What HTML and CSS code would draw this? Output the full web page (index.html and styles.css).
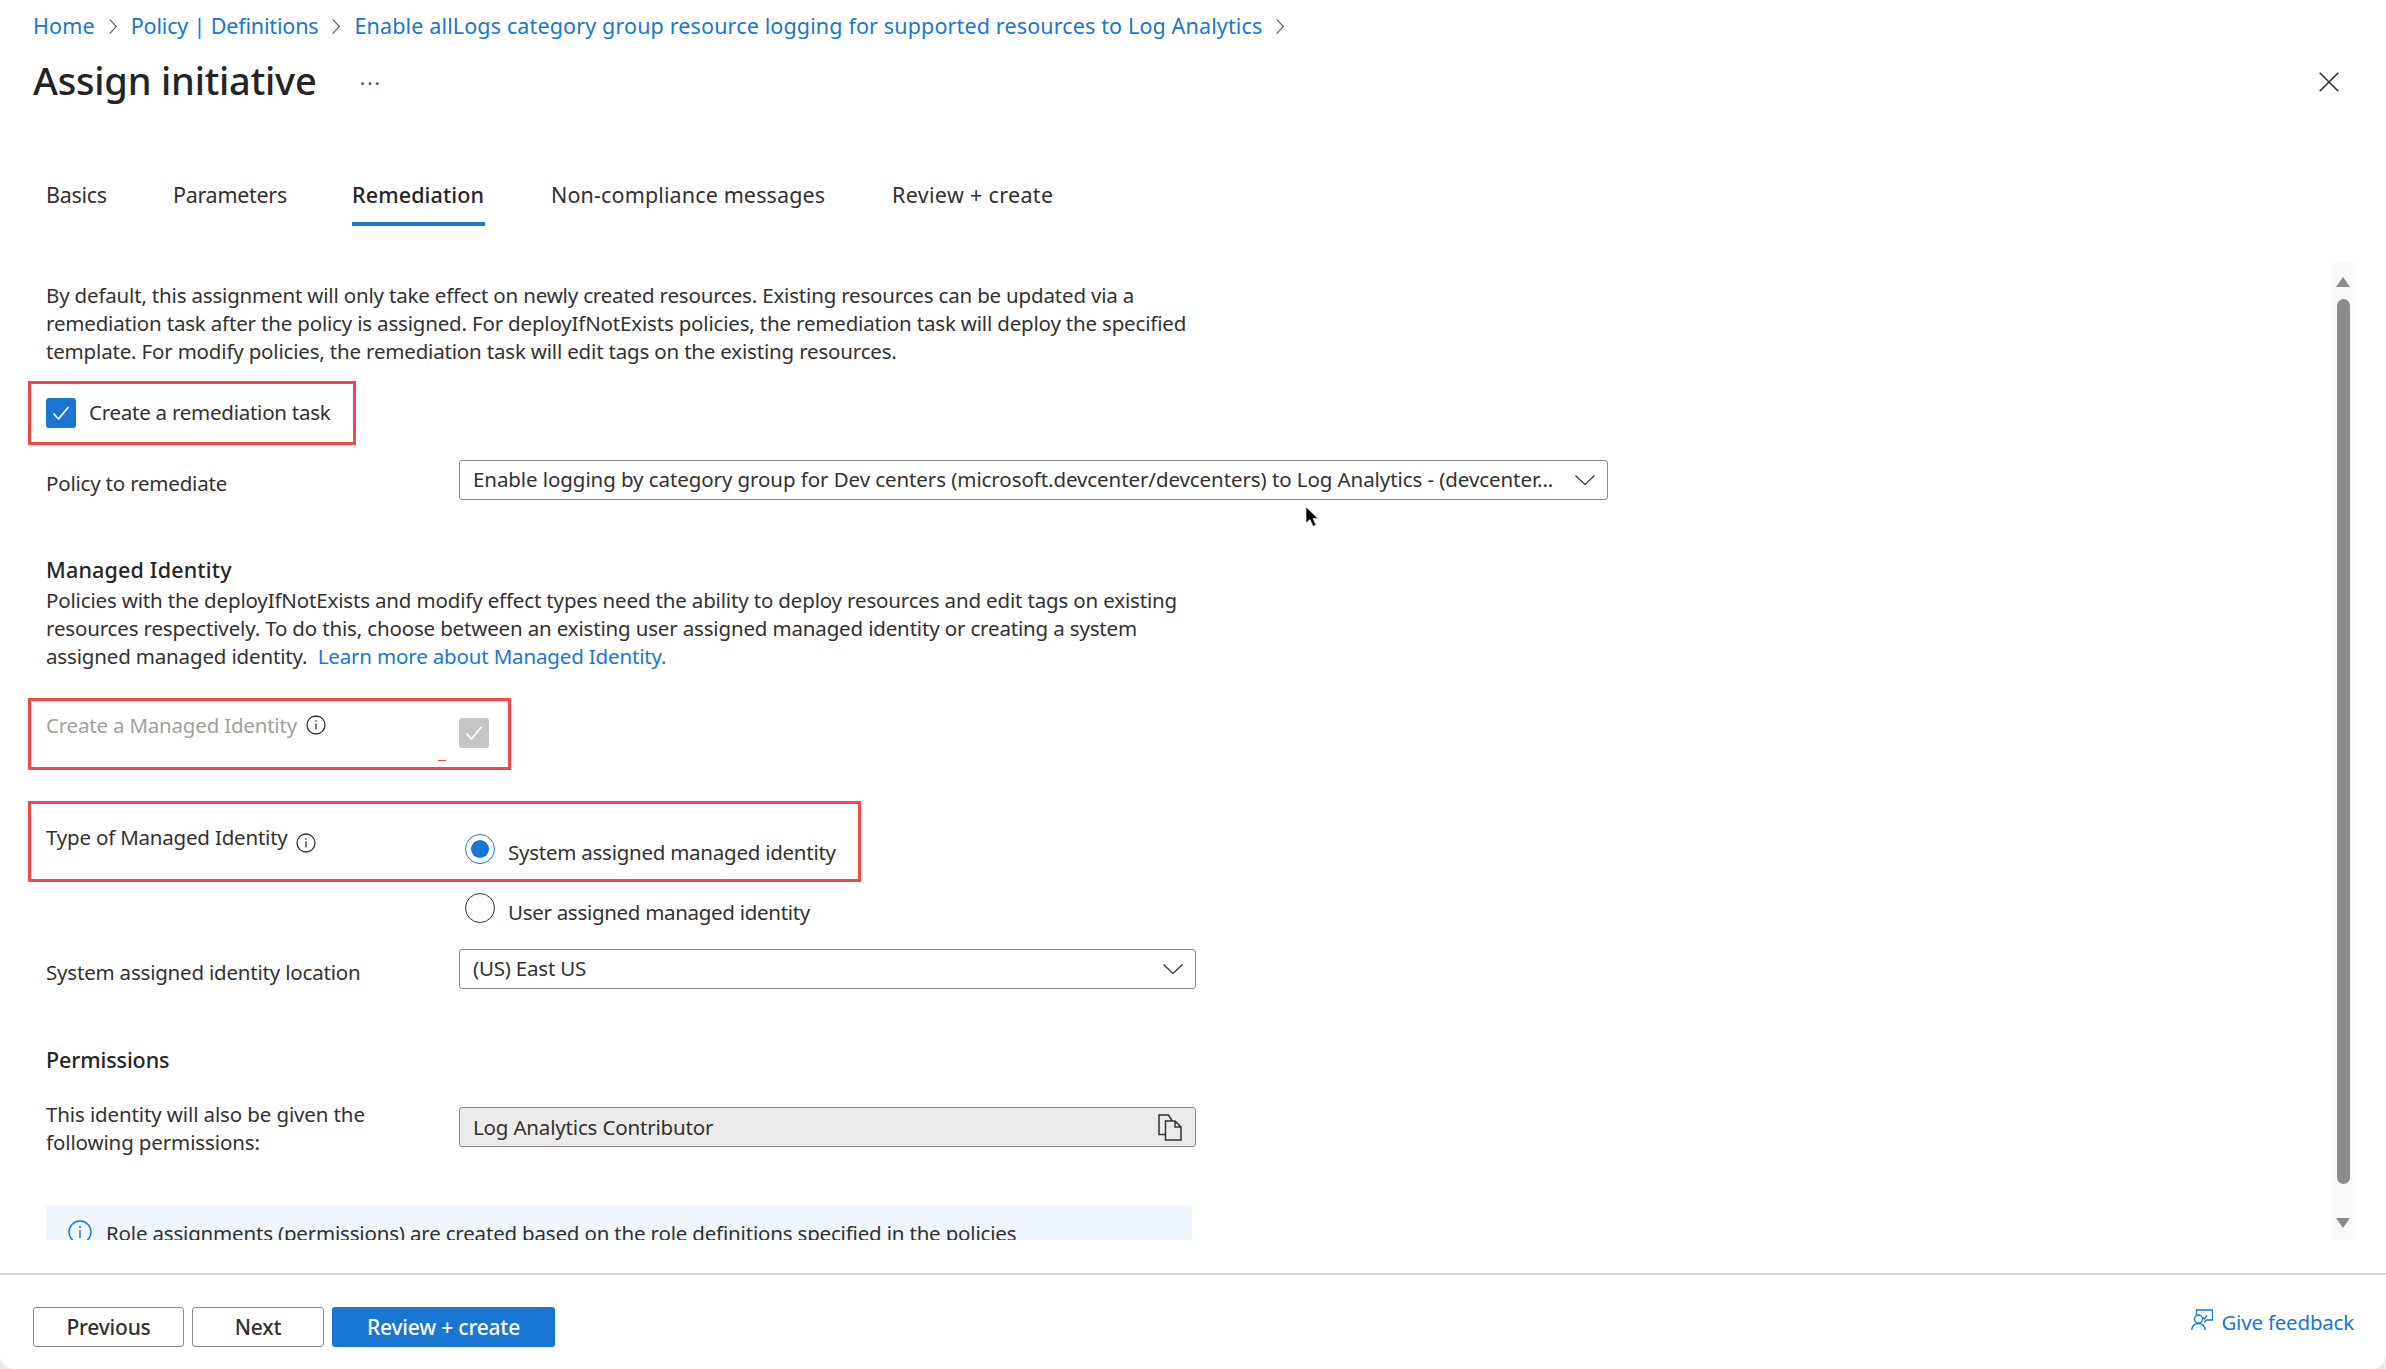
FILE: index.html
```html
<!DOCTYPE html>
<html lang="en">
<head>
<meta charset="utf-8">
<title>Assign initiative</title>
<link rel="stylesheet" href="styles.css">
</head>
<body>
<div class="page">
  <nav class="crumbs">
    <a class="link">Home</a>
    <svg class="crumb-sep" viewBox="0 0 10 18"><path d="M1.5 1.5 8.5 9l-7 7.5"/></svg>
    <a class="link crumb-policy">Policy | Definitions</a>
    <svg class="crumb-sep" viewBox="0 0 10 18"><path d="M1.5 1.5 8.5 9l-7 7.5"/></svg>
    <a class="link">Enable allLogs category group resource logging for supported resources to Log Analytics</a>
    <svg class="crumb-sep" viewBox="0 0 10 18"><path d="M1.5 1.5 8.5 9l-7 7.5"/></svg>
  </nav>
  <header class="title-row">
    <h1 class="title">Assign initiative</h1>
    <span class="more">···</span>
    <svg class="close" viewBox="0 0 20 20"><path d="M.7.7l18.6 18.6M19.3.7.7 19.3"/></svg>
  </header>
  <div class="tabs">
    <span class="tab tab-basics">Basics</span>
    <span class="tab tab-params">Parameters</span>
    <span class="tab tab-active">Remediation</span>
    <span class="tab tab-non">Non-compliance messages</span>
    <span class="tab tab-review">Review + create</span>
  </div>
  <div class="body">
    <main class="content">
      <p class="para intro">By default, this assignment will only take effect on newly created resources. Existing resources can be updated via a<br>remediation task after the policy is assigned. For deployIfNotExists policies, the remediation task will deploy the specified<br>template. For modify policies, the remediation task will edit tags on the existing resources.</p>

      <div class="redbox box-task">
        <span class="check check-on"><svg viewBox="0 0 30 30"><path d="M7.5 15.5l5 5.5 10-12"/></svg></span>
        <span class="task-label">Create a remediation task</span>
      </div>

      <div class="row row-policy">
        <span class="row-label pad9">Policy to remediate</span>
        <div class="field field-wide">
          <span class="field-text policy-text">Enable logging by category group for Dev centers (microsoft.devcenter/devcenters) to Log Analytics - (devcenter...</span>
          <svg class="chev" viewBox="0 0 20 10"><path d="M.5.5 10 9.5 19.5.5"/></svg>
        </div>
      </div>

      <h2 class="heading head-mi">Managed Identity</h2>
      <p class="para mi-para">Policies with the deployIfNotExists and modify effect types need the ability to deploy resources and edit tags on existing<br>resources respectively. To do this, choose between an existing user assigned managed identity or creating a system<br>assigned managed identity. &nbsp;<a class="link">Learn more about Managed Identity.</a></p>

      <div class="redbox box-create">
        <span class="create-label">Create a Managed Identity
          <svg class="info" viewBox="0 0 20 20"><circle cx="10" cy="10" r="9"/><path d="M10 8.5v6M10 5.2v1.6"/></svg>
        </span>
        <span class="check check-off"><svg viewBox="0 0 30 30"><path d="M7.5 15.5l5 5.5 10-12"/></svg></span>
        <span class="dash"></span>
      </div>

      <div class="redbox box-type">
        <span class="type-label">Type of Managed Identity
          <svg class="info info-low" viewBox="0 0 20 20"><circle cx="10" cy="10" r="9"/><path d="M10 8.5v6M10 5.2v1.6"/></svg>
        </span>
        <span class="radio radio-on"></span>
        <span class="radio-text">System assigned managed identity</span>
      </div>

      <div class="radio-row">
        <span class="radio"></span>
        <span class="radio-text2">User assigned managed identity</span>
      </div>

      <div class="row row-location">
        <span class="row-label pad9">System assigned identity location</span>
        <div class="field field-std">
          <span class="field-text">(US) East US</span>
          <svg class="chev" viewBox="0 0 20 10"><path d="M.5.5 10 9.5 19.5.5"/></svg>
        </div>
      </div>

      <h2 class="heading head-perm">Permissions</h2>

      <div class="row row-perm">
        <span class="row-label perm-label">This identity will also be given the<br>following permissions:</span>
        <div class="field field-std field-ro">
          <span class="ro-text">Log Analytics Contributor</span>
          <svg class="copy" viewBox="0 0 24 27"><path d="M7.5 20.500H1V1h9.500l3.500 5.500M7.500 7h9.500l6 6v13H7.500z M17 7v6h6"/></svg>
        </div>
      </div>

      <div class="notice">
        <svg class="notice-icon" viewBox="0 0 24 24"><circle cx="12" cy="12" r="11"/><path d="M12 10v8M12 6v2"/></svg>
        <span>Role assignments (permissions) are created based on the role definitions specified in the policies</span>
      </div>
    </main>
    <div class="scrollbar">
      <span class="arrow-up"></span>
      <span class="thumb"></span>
      <span class="arrow-down"></span>
    </div>
  </div>
  <footer class="footer">
    <button class="btn btn-prev">Previous</button>
    <button class="btn btn-next">Next</button>
    <button class="btn btn-primary">Review + create</button>
    <a class="feedback">
      <svg class="feedback-icon" viewBox="0 0 22 22"><path d="M5.500 6V1h16v10h-6l-2.500 2.500"/><path d="M16 6l-2.500 4-2-1.500"/><circle cx="7.500" cy="10" r="4"/><path d="M.7 21c.5-4 3-6.500 6.800-6.500s6.300 2.500 6.800 6.500"/></svg>
      <span>Give feedback</span>
    </a>
  </footer>
  <svg class="cursor" viewBox="0 0 12 20"><path d="M0 0v16l4-3.500 3 7 3-1.500-3-6.500h5z"/></svg>
</div>
</body>
</html>
```
FILE: styles.css
```css
* { box-sizing: border-box; }
html, body { margin: 0; padding: 0; height: 100%; background: #ececec; overflow: hidden; }
body { font-family: "Noto Sans", "Open Sans", "Liberation Sans", sans-serif; font-size: 20.5px; line-height: 28px; color: #323130; letter-spacing: -0.2px; }
.page { position: relative; width: 2386px; height: 1369px; background: #fff; border-radius: 0 0 14px 14px; display: flex; flex-direction: column; overflow: hidden; }
.link { color: #1976d2; }

.crumbs { display: flex; align-items: center; padding: 12px 0 0 33px; height: 40px; font-size: 21.5px; letter-spacing: 0.14px; }
.crumb-policy { letter-spacing: -0.16px; }
.crumb-sep { width: 10px; height: 17px; margin: 0 13px; fill: none; stroke: #605e5c; stroke-width: 1.2; }

.title-row { display: flex; align-items: center; height: 50px; margin-top: 15px; padding: 0 47px 0 33px; }
.title { margin: 0; font-size: 38px; line-height: 50px; font-weight: 500; color: #242424; letter-spacing: -0.2px; }
.more { margin: 4px 0 0 43px; font-size: 22px; color: #605e5c; letter-spacing: 1.5px; }
.close { margin: 4px 0 0 auto; width: 20px; height: 20px; fill: none; stroke: #323130; stroke-width: 1.6; }

.tabs { display: flex; height: 45px; margin-top: 76px; padding-left: 46px; font-size: 21.5px; letter-spacing: 0.13px; }
.tab { display: block; height: 45px; padding-bottom: 13px; border-bottom: 4px solid transparent; }
.tab-basics { width: 127px; letter-spacing: -0.3px; }
.tab-params { width: 179px; letter-spacing: -0.3px; }
.tab-active { width: 133px; margin-right: 66px; font-weight: 500; color: #242424; border-bottom-color: #1976d2; white-space: nowrap; }
.tab-non { width: 341px; }
.tab-review { width: 170px; letter-spacing: 0.33px; }

.body { display: flex; height: 977px; margin-top: 37px; padding-right: 31px; }
.content { flex: 1; overflow: hidden; padding: 18px 0 0 28px; }
.para { margin: 0 0 0 18px; white-space: nowrap; letter-spacing: -0.18px; }

.redbox { position: relative; border: 3px solid #f44848; }
.box-task { display: flex; align-items: center; width: 328px; height: 64px; margin-top: 16px; padding-left: 15px; }
.check { display: flex; width: 30px; height: 30px; border-radius: 3px; flex: none; }
.check svg { width: 30px; height: 30px; fill: none; stroke: #fff; stroke-width: 1.7; }
.check-on { background: #1976d2; }
.check-off { background: #c8c6c4; margin-top: 7px; }
.task-label { margin-left: 13px; padding-bottom: 2px; white-space: nowrap; letter-spacing: -0.25px; }

.row { display: grid; grid-template-columns: 413px auto; justify-content: start; padding-left: 18px; }
.row-label { white-space: nowrap; }
.perm-label { letter-spacing: -0.12px; }
.pad9 { padding-top: 9px; }
.row-policy { margin-top: 15px; }
.field { display: flex; align-items: center; justify-content: space-between; height: 40px; padding: 0 12.5px 0 13px; border: 1.5px solid #8a8886; border-radius: 3px; background: #fff; white-space: nowrap; }
.field-wide { width: 1149px; }
.field-std { width: 737px; }
.field-ro { background: #edebe9; padding-right: 13px; }
.field-text { display: block; overflow: hidden; padding-bottom: 2px; }
.policy-text { letter-spacing: -0.08px; }
.ro-text { display: block; letter-spacing: -0.17px; }
.chev { width: 20px; height: 10px; fill: none; stroke: #323130; stroke-width: 1.2; flex: none; }

.heading { margin: 0 0 0 18px; font-size: 21.5px; line-height: 28px; font-weight: 500; color: #242424; letter-spacing: -0.1px; }
.head-mi { margin-top: 56px; letter-spacing: 0.18px; }
.mi-para { margin-top: 2px; letter-spacing: -0.16px; }

.box-create { display: grid; grid-template-columns: 413px auto; align-items: start; justify-content: start; width: 483px; height: 72px; margin-top: 28px; padding: 10px 0 0 15px; }
.create-label { display: flex; align-items: center; color: #a19f9d; white-space: nowrap; }
.info { width: 20px; height: 20px; margin-left: 9px; fill: none; stroke: #323130; stroke-width: 1.3; flex: none; }
.info-low { position: relative; top: 6px; left: -1px; }
.dash { position: absolute; left: 407px; top: 59px; width: 8px; height: 1px; background: #f44848; }

.box-type { display: flex; align-items: flex-start; width: 833px; height: 81px; margin-top: 31px; padding: 19px 0 0 15px; }
.type-label { display: flex; align-items: center; width: 419px; flex: none; white-space: nowrap; }
.radio { display: block; width: 30px; height: 30px; flex: none; border: 1.5px solid #323130; border-radius: 50%; }
.box-type .radio { margin-top: 11px; }
.radio-on { position: relative; border-color: #1976d2; }
.radio-on::after { content: ""; position: absolute; left: 4.5px; top: 4.5px; width: 18px; height: 18px; border-radius: 50%; background: #1976d2; }
.radio-text { margin: 15px 0 0 13px; white-space: nowrap; letter-spacing: -0.25px; }
.radio-row { display: flex; align-items: flex-start; height: 30px; margin: 11px 0 0 437px; }
.radio-text2 { margin: 5px 0 0 13px; white-space: nowrap; letter-spacing: -0.3px; }

.row-location { margin-top: 26px; }
.head-perm { margin-top: 57px; }
.row-perm { margin-top: 26px; }
.row-perm .field { margin-top: 7px; }
.copy { width: 24px; height: 27px; fill: none; stroke: #323130; stroke-width: 1.5; flex: none; }

.notice { display: flex; align-items: flex-start; width: 1146px; height: 80px; margin: 50px 0 0 18px; padding: 13px 0 0 22px; background: #eff6fc; white-space: nowrap; letter-spacing: -0.18px; }
.notice-icon { width: 24px; height: 24px; margin: 1px 14px 0 0; fill: none; stroke: #1976d2; stroke-width: 1.4; flex: none; }

.scrollbar { position: relative; width: 23px; flex: none; background: #fafafa; }
.arrow-up, .arrow-down { position: absolute; left: 4px; width: 0; height: 0; border-left: 7.5px solid transparent; border-right: 7.5px solid transparent; }
.arrow-up { top: 14px; border-bottom: 10px solid #8a8a8a; }
.arrow-down { bottom: 12px; border-top: 10px solid #8a8a8a; }
.thumb { position: absolute; left: 5px; top: 36px; width: 13px; height: 885px; border-radius: 7px; background: #8c8c8c; }

.footer { display: flex; align-items: flex-start; height: 96px; margin-top: 33px; padding: 32px 32px 0 33px; border-top: 2px solid #d8d6d4; }
.btn { height: 40px; margin-right: 8px; padding: 0; border: 1.5px solid #8a8886; border-radius: 3px; background: #fff; color: #323130; font: 500 21px/28px "Noto Sans", sans-serif; letter-spacing: -0.2px; }
.btn-prev { width: 151px; }
.btn-next { width: 132px; }
.btn-primary { width: 223px; border: 0; background: #1976d2; color: #fff; }
.feedback { display: flex; align-items: center; margin-left: auto; color: #1976d2; white-space: nowrap; height: 28px; margin-top: 1px; }
.feedback-icon { width: 22px; height: 22px; margin: -5px 8px 0 0; fill: none; stroke: #1976d2; stroke-width: 1.3; }
.cursor { position: absolute; left: 1306px; top: 507px; width: 12px; height: 20px; fill: #000; stroke: #fff; stroke-width: 0.6; }
```
